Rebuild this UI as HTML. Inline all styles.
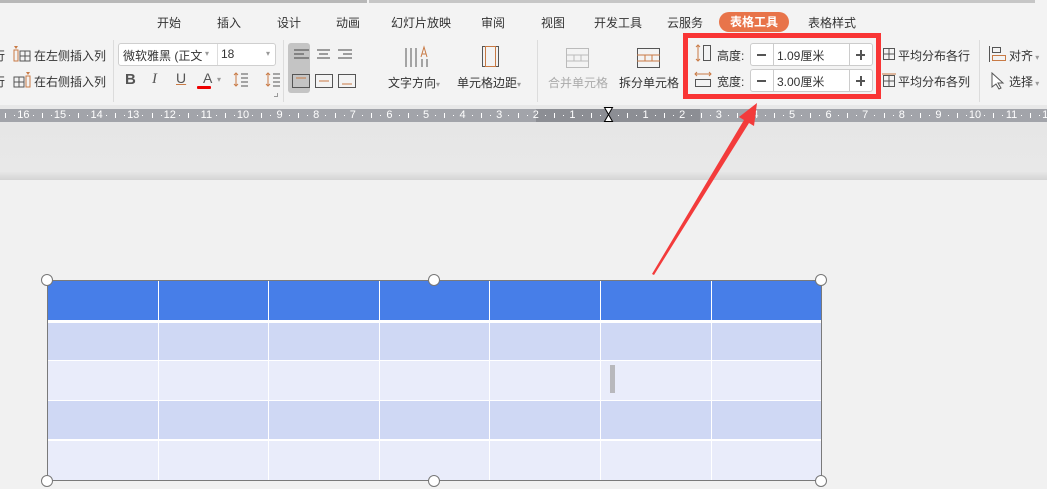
<!DOCTYPE html>
<html><head><meta charset="utf-8"><style>
*{margin:0;padding:0;box-sizing:border-box}
body{width:1047px;height:489px;overflow:hidden;background:#f1f1f1;font-family:"Liberation Sans","Noto Sans CJK SC",sans-serif;position:relative;color:#333}
.a{position:absolute;white-space:nowrap}
.t{font-size:12px;color:#333}
.tab{position:absolute;top:14px;font-size:12px;color:#333}
.sep{position:absolute;width:1px;background:#dcdcdc}
.ic{position:absolute}
.rn{position:absolute;top:109px;font-size:11px;line-height:13px;color:#fff;transform:translateX(-50%)}
.rt{position:absolute;width:1px;background:#fff}
</style></head><body>
<div class="a" style="left:0;top:0;width:1047px;height:108px;background:#f3f3f3"></div>
<div class="a" style="left:0;top:0;width:367px;height:3px;background:#b8b8b8"></div>
<div class="a" style="left:369px;top:0;width:666px;height:3px;background:#c6c6c6"></div>
<div class="tab" style="left:157px">开始</div>
<div class="tab" style="left:217px">插入</div>
<div class="tab" style="left:277px">设计</div>
<div class="tab" style="left:336px">动画</div>
<div class="tab" style="left:391px">幻灯片放映</div>
<div class="tab" style="left:481px">审阅</div>
<div class="tab" style="left:541px">视图</div>
<div class="tab" style="left:594px">开发工具</div>
<div class="tab" style="left:667px">云服务</div>
<div class="a" style="left:719px;top:12px;width:70px;height:20px;border-radius:10px;background:#e8744a;color:#fff;font-size:12px;font-weight:bold;text-align:center;line-height:20px">表格工具</div>
<div class="tab" style="left:808px">表格样式</div>
<div class="a t" style="left:-7px;top:47px">行</div>
<div class="a t" style="left:-7px;top:73px">行</div>
<svg class="ic" style="left:13px;top:46px" width="18" height="16"><rect x="1" y="4" width="4" height="11" fill="none" stroke="#c87a45"/><rect x="7" y="5" width="10" height="10" fill="none" stroke="#555"/><line x1="12" y1="5" x2="12" y2="15" stroke="#555"/><line x1="7" y1="10" x2="17" y2="10" stroke="#555"/><path d="M1 0h4l-2 3z" fill="#c87a45"/></svg>
<div class="a t" style="left:34px;top:47px">在左侧插入列</div>
<svg class="ic" style="left:13px;top:72px" width="18" height="16"><rect x="1" y="5" width="10" height="10" fill="none" stroke="#555"/><line x1="6" y1="5" x2="6" y2="15" stroke="#555"/><line x1="1" y1="10" x2="11" y2="10" stroke="#555"/><rect x="13" y="4" width="4" height="11" fill="none" stroke="#c87a45"/><path d="M13 0h4l-2 3z" fill="#c87a45"/></svg>
<div class="a t" style="left:34px;top:73px">在右侧插入列</div>
<div class="sep" style="left:113px;top:40px;height:62px"></div>
<div class="a" style="left:118px;top:43px;width:158px;height:23px;border:1px solid #cfcfcf;background:#fff;border-radius:3px"></div>
<div class="a" style="left:217px;top:44px;width:1px;height:21px;background:#ddd"></div>
<div class="a t" style="left:123px;top:47px">微软雅黑 (正文</div>
<div class="a" style="left:205px;top:49px;font-size:8px;color:#999">▾</div>
<div class="a t" style="left:221px;top:47px">18</div>
<div class="a" style="left:266px;top:49px;font-size:8px;color:#999">▾</div>
<div class="a" style="left:125px;top:71px;font-size:15px;font-weight:bold;color:#555">B</div>
<div class="a" style="left:152px;top:71px;font-size:15px;font-style:italic;font-family:'Liberation Serif',serif;color:#555">I</div>
<div class="a" style="left:176px;top:70px;font-size:14px;color:#555;text-decoration:underline;text-decoration-color:#c87a45">U</div>
<div class="a" style="left:203px;top:70px;font-size:14px;color:#555">A</div>
<div class="a" style="left:197px;top:86px;width:14px;height:3px;background:#e00;border-radius:1px"></div>
<div class="a" style="left:217px;top:75px;font-size:8px;color:#999">▾</div>
<svg class="ic" style="left:233px;top:72px" width="50" height="16"><g stroke="#c87a45"><path d="M3 1v13M1 3l2-2 2 2M1 12l2 2 2-2" fill="none"/></g><g stroke="#555"><path d="M8 2h7M8 6h7M8 10h7M8 14h7"/></g><g stroke="#c87a45"><path d="M35 1v13M33 3l2-2 2 2M33 12l2 2 2-2" fill="none"/></g><g stroke="#555"><path d="M40 2h7M40 6h7M40 10h7M40 14h7"/></g></svg>
<div class="a" style="left:274px;top:93px;width:4px;height:4px;border-right:1px solid #999;border-bottom:1px solid #999"></div>
<div class="sep" style="left:283px;top:40px;height:62px"></div>
<div class="a" style="left:288px;top:43px;width:22px;height:50px;border-radius:3px;background:#c4c4c4"></div>
<svg class="ic" style="left:290px;top:45px" width="80" height="46"><g stroke="#444"><path d="M4 5h15M4 9h10M4 13h15"/><path d="M27 5h13M29 9h9M27 13h13"/><path d="M48 5h14M53 9h9M48 13h14"/></g><g fill="none" stroke="#555"><rect x="2.5" y="29.5" width="17" height="13"/><rect x="25.5" y="29.5" width="17" height="13"/><rect x="48.5" y="29.5" width="17" height="13"/></g><g stroke="#c87a45"><path d="M6 33h10M29 36h10M52 39h10"/></g></svg>
<svg class="ic" style="left:403px;top:45px" width="28" height="24"><g stroke="#555"><path d="M3 3v19M8 3v19M13 3v19M19 14v8M24 14v8"/></g><path d="M18 12l3-10 3 10M19 9h4" stroke="#c87a45" fill="none"/></svg>
<div class="a t" style="left:388px;top:74px">文字方向<span style="font-size:8px;color:#999">▾</span></div>
<svg class="ic" style="left:480px;top:44px" width="22" height="26"><rect x="2.5" y="2.5" width="16" height="20" fill="none" stroke="#555"/><rect x="5.5" y="2.5" width="10" height="20" fill="none" stroke="#c87a45"/></svg>
<div class="a t" style="left:457px;top:74px">单元格边距<span style="font-size:8px;color:#999">▾</span></div>
<div class="sep" style="left:537px;top:40px;height:62px"></div>
<svg class="ic" style="left:565px;top:47px" width="26" height="22"><rect x="1.5" y="1.5" width="22" height="19" fill="none" stroke="#bbb"/><path d="M1 8h23M1 14h23M9 8v6M16 8v6" stroke="#bbb"/></svg>
<div class="a t" style="left:548px;top:74px;color:#aaa">合并单元格</div>
<svg class="ic" style="left:636px;top:47px" width="26" height="22"><rect x="1.5" y="1.5" width="22" height="19" fill="none" stroke="#555"/><path d="M1 8h23M1 14h23M9 8v6M16 8v6" stroke="#c87a45"/></svg>
<div class="a t" style="left:619px;top:74px">拆分单元格</div>
<div class="a" style="left:683px;top:33px;width:198px;height:66px;border:5px solid #f93535"></div>
<svg class="ic" style="left:694px;top:44px" width="20" height="18"><path d="M4 1v16M2 3l2-2 2 2M2 15l2 2 2-2" stroke="#c87a45" fill="none"/><rect x="9.5" y="1.5" width="7" height="15" fill="none" stroke="#555"/></svg>
<div class="a t" style="left:717px;top:47px">高度:</div>
<svg class="ic" style="left:694px;top:70px" width="20" height="18"><path d="M1 4h16M3 2l-2 2 2 2M15 2l2 2-2 2" stroke="#c87a45" fill="none"/><rect x="1.5" y="9.5" width="15" height="7" fill="none" stroke="#555"/></svg>
<div class="a t" style="left:717px;top:73px">宽度:</div>
<div class="a" style="left:750px;top:43px;width:123px;height:23px;border:1px solid #ccc;border-radius:3px;background:#fff"></div>
<div class="a" style="left:750px;top:69px;width:123px;height:23px;border:1px solid #ccc;border-radius:3px;background:#fff"></div>
<div class="a" style="left:773px;top:44px;width:1px;height:21px;background:#ccc"></div>
<div class="a" style="left:849px;top:44px;width:1px;height:21px;background:#ccc"></div>
<div class="a" style="left:773px;top:70px;width:1px;height:21px;background:#ccc"></div>
<div class="a" style="left:849px;top:70px;width:1px;height:21px;background:#ccc"></div>
<div class="a" style="left:757px;top:54px;width:9px;height:2px;background:#555"></div>
<div class="a" style="left:757px;top:80px;width:9px;height:2px;background:#555"></div>
<div class="a" style="left:856px;top:54px;width:9px;height:2px;background:#555"></div>
<div class="a" style="left:860px;top:50px;width:2px;height:10px;background:#555"></div>
<div class="a" style="left:856px;top:80px;width:9px;height:2px;background:#555"></div>
<div class="a" style="left:860px;top:76px;width:2px;height:10px;background:#555"></div>
<div class="a t" style="left:777px;top:47px">1.09厘米</div>
<div class="a t" style="left:777px;top:73px">3.00厘米</div>
<svg class="ic" style="left:882px;top:47px" width="14" height="14"><rect x="1.5" y="1.5" width="11" height="11" fill="none" stroke="#555"/><path d="M7 1v12M1 7h12" stroke="#555"/></svg>
<div class="a t" style="left:898px;top:47px">平均分布各行</div>
<svg class="ic" style="left:881px;top:73px" width="16" height="14"><rect x="2.5" y="2.5" width="11" height="11" fill="none" stroke="#555"/><path d="M8 2v12M2 8h12" stroke="#555"/><path d="M1 1h14" stroke="#c87a45"/></svg>
<div class="a t" style="left:898px;top:73px">平均分布各列</div>
<div class="sep" style="left:979px;top:40px;height:62px"></div>
<svg class="ic" style="left:988px;top:45px" width="20" height="18"><path d="M1.5 1v16" stroke="#555"/><rect x="4.5" y="2.5" width="8" height="5" fill="none" stroke="#555"/><rect x="4.5" y="10.5" width="13" height="5" fill="none" stroke="#c87a45"/></svg>
<div class="a t" style="left:1009px;top:47px">对齐<span style="font-size:8px;color:#999"> ▾</span></div>
<svg class="ic" style="left:990px;top:72px" width="16" height="18"><path d="M2 1v14l4-3 3 5 2-1-3-5h5z" fill="#fff" stroke="#555"/></svg>
<div class="a t" style="left:1009px;top:73px">选择<span style="font-size:8px;color:#999"> ▾</span></div>
<!-- ruler -->
<div class="a" style="left:0;top:105px;width:1047px;height:4px;background:#e8e8e8"></div>
<div class="a" style="left:0;top:109px;width:1047px;height:13px;background:#a2a4aa"></div>
<div class="a" style="left:536px;top:109px;width:164px;height:13px;background:#8c8e94"></div>
<div id="ruler"></div>
<script>
(function(){var h='',z=609,u=36.6;
for(var n=-17;n<=13;n++){var x=z+n*u;
 if(n!==0&&x>-10&&x<1060)h+='<div class="rn" style="left:'+x.toFixed(1)+'px">'+Math.abs(n)+'</div>';
 var q=[0.25,0.5,0.75];for(var i=0;i<3;i++){var xx=x+q[i]*u;if(xx<0||xx>1047)continue;
  if(i==1)h+='<div class="rt" style="left:'+Math.round(xx)+'px;top:113px;height:5px"></div>';
  else h+='<div class="rt" style="left:'+Math.round(xx)+'px;top:115px;height:1px"></div>';}
}
document.getElementById('ruler').innerHTML=h;})();
</script>
<svg class="ic" style="left:603px;top:106px" width="12" height="23"><path d="M1.5 1.5h8l-4 7 4 7h-8l4-7z" fill="#fff" stroke="#000"/><rect x="1.5" y="16.5" width="8" height="6" fill="#fff" stroke="#000"/></svg>
<div class="a" style="left:0;top:122px;width:1047px;height:58px;background:linear-gradient(#e6e6e6 0,#e8e8e8 85%,#d4d4d4 100%)"></div>
<!-- table -->
<div class="a" style="left:47px;top:280px;width:775px;height:201px;border:1px solid #7a7a7a;background:#fff"></div>
<div class="a" style="left:48px;top:281px;width:773px;height:39px;background:#477ee8"></div>
<div class="a" style="left:48px;top:323px;width:773px;height:37px;background:#cfd8f4"></div>
<div class="a" style="left:48px;top:361px;width:773px;height:39px;background:#e9ecfa"></div>
<div class="a" style="left:48px;top:401px;width:773px;height:38px;background:#cfd8f4"></div>
<div class="a" style="left:48px;top:441px;width:773px;height:39px;background:#e9ecfa"></div>
<div class="a" style="left:158px;top:281px;width:1px;height:199px;background:#fff"></div>
<div class="a" style="left:268px;top:281px;width:1px;height:199px;background:#fff"></div>
<div class="a" style="left:379px;top:281px;width:1px;height:199px;background:#fff"></div>
<div class="a" style="left:489px;top:281px;width:1px;height:199px;background:#fff"></div>
<div class="a" style="left:600px;top:281px;width:1px;height:199px;background:#fff"></div>
<div class="a" style="left:711px;top:281px;width:1px;height:199px;background:#fff"></div>
<div class="a" style="left:610px;top:365px;width:5px;height:28px;background:#b8b8bc"></div>
<div class="a" style="left:41px;top:274px;width:12px;height:12px;border-radius:50%;background:#fff;border:1px solid #777"></div>
<div class="a" style="left:428px;top:274px;width:12px;height:12px;border-radius:50%;background:#fff;border:1px solid #777"></div>
<div class="a" style="left:815px;top:274px;width:12px;height:12px;border-radius:50%;background:#fff;border:1px solid #777"></div>
<div class="a" style="left:41px;top:475px;width:12px;height:12px;border-radius:50%;background:#fff;border:1px solid #777"></div>
<div class="a" style="left:428px;top:475px;width:12px;height:12px;border-radius:50%;background:#fff;border:1px solid #777"></div>
<div class="a" style="left:815px;top:475px;width:12px;height:12px;border-radius:50%;background:#fff;border:1px solid #777"></div>
<svg class="ic" style="left:0;top:0" width="1047" height="489"><path d="M652 274 L744 120 L739 117 L757 103 L754 126 L749 123 L654 275 Z" fill="#f33b3b"/></svg>
</body></html>
